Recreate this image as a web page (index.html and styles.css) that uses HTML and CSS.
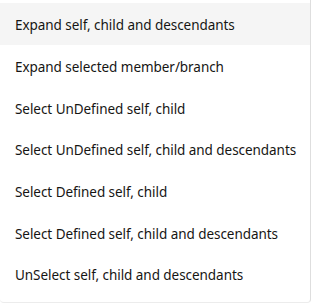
FILE: index.html
```html
<!DOCTYPE html>
<html lang="en">
<head>
    <meta charset="UTF-8">
    <title>Tree Menu</title>
    <link rel="stylesheet" href="styles.css">
</head>
<body>
    <ul class="menu">
        <li class="menu-item hover">Expand self, child and descendants</li>
        <li class="menu-item">Expand selected member/branch</li>
        <li class="menu-item">Select UnDefined self, child</li>
        <li class="menu-item">Select UnDefined self, child and descendants</li>
        <li class="menu-item">Select Defined self, child</li>
        <li class="menu-item">Select Defined self, child and descendants</li>
        <li class="menu-item">UnSelect self, child and descendants</li>
    </ul>
</body>
</html>
```

FILE: styles.css
```css
body {
    margin: 0;
    background-color: #fff;
    font-family: "Noto Sans", sans-serif;
}

.menu {
    list-style: none;
    margin: 0;
    padding: 3px 0 7px;
    width: 310px;
    border-right: 1px solid #dedede;
    border-bottom: 1px solid #ececec;
    border-bottom-left-radius: 4px;
    border-bottom-right-radius: 4px;
}

.menu-item {
    box-sizing: border-box;
    height: 41.66px;
    display: flex;
    align-items: center;
    padding: 3px 15px 0;
    font-size: 13.5px;
    letter-spacing: -0.05px;
    color: #161513;
    cursor: pointer;
    white-space: nowrap;
}

.menu-item.hover,
.menu-item:hover {
    background-color: #f5f5f5;
}
```
